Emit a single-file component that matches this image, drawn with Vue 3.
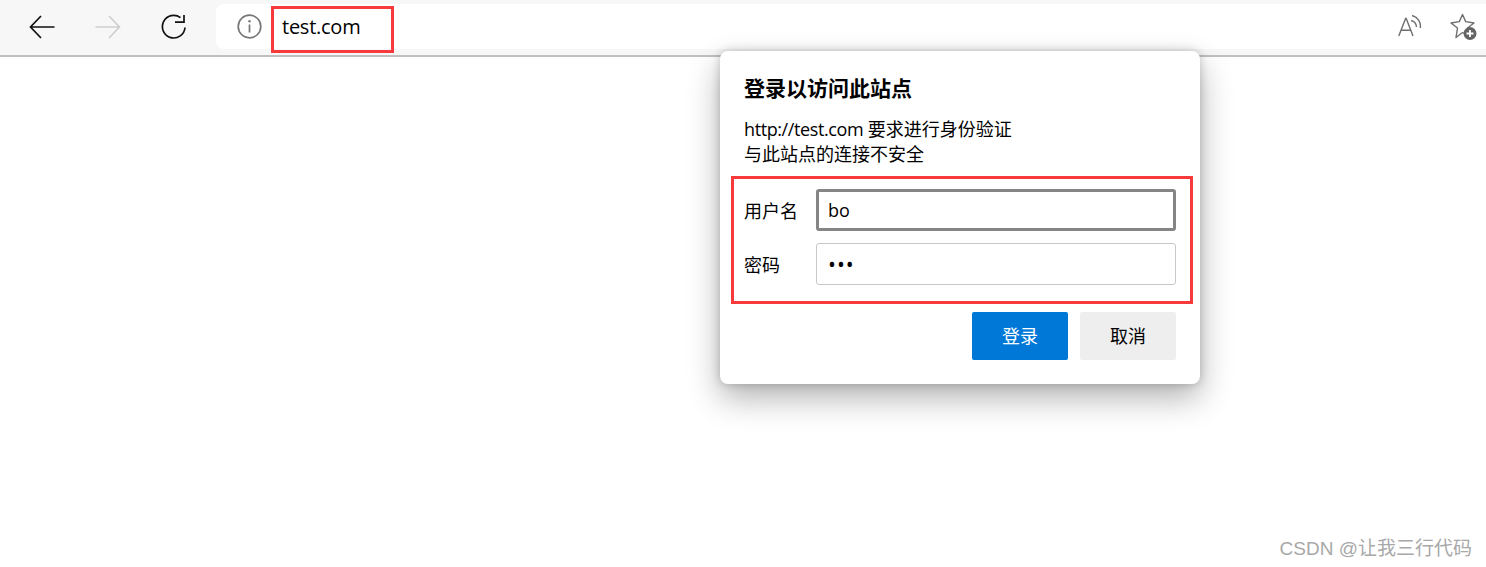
<script setup>
import { ref } from 'vue';

const username = ref('bo');
const password = ref('abc');
</script>

<template>
  <div class="page">
    <header class="toolbar">
      <button class="nav-btn" type="button" aria-label="后退">
        <svg width="26" height="24" viewBox="0 0 26 24"><path d="M12 1 1.500 12 12 23M1.500 12H25.500" fill="none" stroke="#111" stroke-width="1.7"/></svg>
      </button>
      <button class="nav-btn" type="button" aria-label="前进">
        <svg width="26" height="24" viewBox="0 0 26 24"><path d="M14 1 24.500 12 14 23M24.500 12H.5" fill="none" stroke="#cfcfcf" stroke-width="1.7"/></svg>
      </button>
      <button class="nav-btn" type="button" aria-label="刷新">
        <svg width="26" height="26" viewBox="0 0 26 26"><path d="M19.500 3.600A11.300 11.300 0 1 0 24 13.500" fill="none" stroke="#111" stroke-width="1.7"/><path d="M14 8.200H23V1" fill="none" stroke="#111" stroke-width="1.7"/></svg>
      </button>
      <div class="address">
        <svg class="info" width="25" height="25" viewBox="0 0 25 25">
          <circle cx="12.500" cy="12.500" r="11.300" fill="none" stroke="#777" stroke-width="1.7"/>
          <path d="M12.500 10.500v8" stroke="#777" stroke-width="1.7"/>
          <circle cx="12.500" cy="7.200" r="1.200" fill="#777"/>
        </svg>
        <span class="url">test.com</span>
        <div class="address-actions">
          <svg width="26" height="24" viewBox="0 0 26 24">
            <path d="M.8 21 7.600 3.500h.6L15 21M3 15.200H12.800" fill="none" stroke="#6f6f6f" stroke-width="1.4"/>
            <path d="M13 5.500a7 7 0 0 1 5.500 6.500M14 .5a11 11 0 0 1 8.300 12.500" fill="none" stroke="#6f6f6f" stroke-width="1.4"/>
          </svg>
          <svg width="28" height="27" viewBox="0 0 28 27">
            <path d="M13.500 1.500 16.700 8.600 25 10 18.500 15 20 23 13.500 19.500 7 24.500 8.500 15 2 10 10.300 8.600Z" fill="none" stroke="#6f6f6f" stroke-width="1.4" stroke-linejoin="round"/>
            <circle cx="21" cy="20.500" r="6.500" fill="#636363"/>
            <path d="M17.500 20.500h7M21 17v7" stroke="#fff" stroke-width="1.800"/>
          </svg>
        </div>
      </div>
    </header>

    <div class="url-mark"></div>

    <form class="dialog" @submit.prevent>
      <h1>登录以访问此站点</h1>
      <p class="desc"><span class="latin">http://test.com</span> 要求进行身份验证<br>与此站点的连接不安全</p>
      <div class="fields">
        <label class="field">
          <span>用户名</span>
          <input class="focused" type="text" v-model="username">
        </label>
        <label class="field">
          <span>密码</span>
          <input class="secret" type="password" v-model="password">
        </label>
      </div>
      <div class="actions">
        <button class="btn primary" type="submit">登录</button>
        <button class="btn" type="button">取消</button>
      </div>
    </form>

    <div class="watermark">CSDN @让我三行代码</div>
  </div>
</template>

<style>
html, body {
  margin: 0;
  overflow: hidden;
  background: #fff;
}
</style>

<style scoped>
.page {
  position: relative;
  height: 567px;
  overflow: hidden;
  background: #fff;
  color: #000;
  font-family: "Open Sans", "Noto Sans CJK SC", sans-serif;
}

.toolbar {
  display: flex;
  align-items: center;
  box-sizing: border-box;
  height: 57px;
  padding: 2px 0 4px 9px;
  background: #f7f7f7;
  border-bottom: 2px solid #c0c0c0;
}

.nav-btn {
  display: flex;
  align-items: center;
  justify-content: center;
  width: 66px;
  height: 40px;
  padding: 0;
  border: none;
  background: none;
}

.address {
  display: flex;
  align-items: center;
  flex: 1;
  height: 45px;
  margin-left: 9px;
  padding-left: 21px;
  background: #fff;
  border-radius: 8px 0 0 8px;
}

.info {
  flex: none;
}

.url {
  margin-left: 20px;
  font-size: 20px;
  letter-spacing: -0.25px;
}

.address-actions {
  display: flex;
  align-items: center;
  gap: 25px;
  margin-left: auto;
  margin-right: 9px;
}

.url-mark {
  position: absolute;
  left: 271px;
  top: 6px;
  width: 123px;
  height: 47px;
  box-sizing: border-box;
  border: 3px solid #f93a3d;
}

.dialog {
  position: absolute;
  left: 720px;
  top: 51px;
  width: 480px;
  height: 333px;
  box-sizing: border-box;
  padding: 23px 24px 24px;
  background: #fff;
  border-radius: 8px;
  box-shadow: 0 14px 32px rgba(0, 0, 0, 0.3), 0 0 10px rgba(0, 0, 0, 0.2);
}

h1 {
  margin: 0;
  font-size: 21px;
  line-height: 28px;
  font-weight: 700;
}

.desc {
  margin: 15px 0 0;
  font-size: 18px;
  line-height: 24.5px;
}

.latin {
  letter-spacing: -0.4px;
}

.fields {
  display: flex;
  flex-direction: column;
  gap: 12px;
  margin: 10px -17px 0 -13px;
  padding: 10px 14px 16px 10px;
  border: 3px solid #f93a3d;
}

.field {
  display: flex;
  align-items: center;
  font-size: 18px;
}

.field span {
  flex: none;
  width: 72px;
}

.field input {
  flex: none;
  width: 360px;
  height: 42px;
  box-sizing: border-box;
  padding: 0 11px;
  border: 1px solid #c8c8c8;
  border-radius: 3px;
  outline: none;
  font: inherit;
  color: #000;
  background: #fff;
}

.field input.focused {
  border: 3px solid #858585;
  padding: 0 9px;
}

.field input.secret {
  font-size: 21px;
  letter-spacing: 1px;
}

.actions {
  display: flex;
  justify-content: flex-end;
  gap: 12px;
  margin-top: 8px;
}

.btn {
  width: 96px;
  height: 48px;
  padding: 0 0 2px;
  border: none;
  border-radius: 2px;
  background: #eee;
  color: #000;
  font: inherit;
  font-size: 18px;
}

.btn.primary {
  background: #0078d7;
  color: #fff;
}

.watermark {
  position: absolute;
  right: 14px;
  top: 537px;
  color: #a8a8a8;
  font-family: "Liberation Sans", "Noto Sans CJK SC", sans-serif;
  font-size: 19px;
  line-height: 24px;
}
</style>
